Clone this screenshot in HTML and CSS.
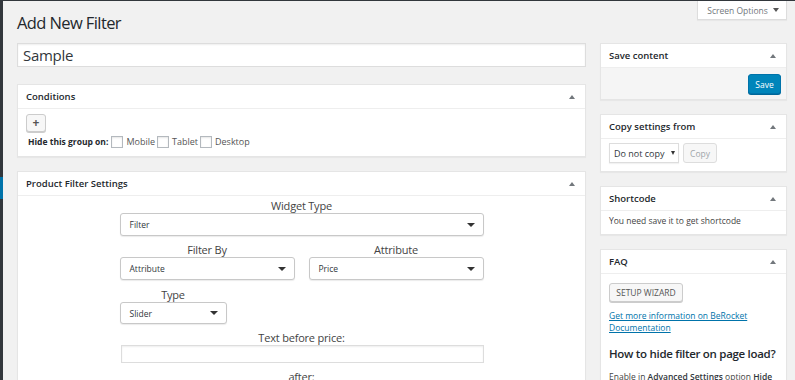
FILE: index.html
```html
<!DOCTYPE html>
<html>
<head>
<meta charset="utf-8">
<link rel="stylesheet" href="styles.css">
</head>
<body>
<div class="admin">
  <div class="sidebar"><span class="active-mark"></span></div>
  <div class="content">
    <div class="topline">
      <h1 class="page-title">Add New Filter</h1>
      <div class="screen-options">Screen Options <span class="tri-down"></span></div>
    </div>
    <div class="columns">
      <div class="main-col">
        <div class="title-input">Sample</div>

        <div class="postbox conditions">
          <div class="box-head"><span>Conditions</span><span class="tri-up"></span></div>
          <div class="box-body cond-body">
            <button class="plus-btn">+</button>
            <div class="hide-row">
              <b>Hide this group on:</b>
              <span class="chk"></span><span class="chk-label">Mobile</span>
              <span class="chk"></span><span class="chk-label">Tablet</span>
              <span class="chk"></span><span class="chk-label">Desktop</span>
            </div>
          </div>
        </div>

        <div class="postbox settings">
          <div class="box-head"><span>Product Filter Settings</span><span class="tri-up"></span></div>
          <div class="box-body settings-body">
            <div class="form">
              <div class="field">
                <div class="flabel">Widget Type</div>
                <div class="select"><span>Filter</span><span class="sel-arrow"></span></div>
              </div>
              <div class="field-row">
                <div class="field">
                  <div class="flabel">Filter By</div>
                  <div class="select"><span>Attribute</span><span class="sel-arrow"></span></div>
                </div>
                <div class="field">
                  <div class="flabel">Attribute</div>
                  <div class="select"><span>Price</span><span class="sel-arrow"></span></div>
                </div>
              </div>
              <div class="field type-field">
                <div class="flabel">Type</div>
                <div class="select short"><span>Slider</span><span class="sel-arrow"></span></div>
              </div>
              <div class="field">
                <div class="flabel">Text before price:</div>
                <div class="text-input"></div>
              </div>
              <div class="field">
                <div class="flabel">after:</div>
              </div>
            </div>
          </div>
        </div>
      </div>

      <div class="side-col">
        <div class="postbox box-save">
          <div class="box-head"><span>Save content</span><span class="tri-up"></span></div>
          <div class="box-body save-body">
            <button class="btn-primary">Save</button>
          </div>
        </div>

        <div class="postbox box-copy">
          <div class="box-head"><span>Copy settings from</span><span class="tri-up"></span></div>
          <div class="box-body copy-body">
            <div class="small-select">Do not copy <span class="tri-small"></span></div>
            <button class="btn-disabled">Copy</button>
          </div>
        </div>

        <div class="postbox box-short">
          <div class="box-head"><span>Shortcode</span><span class="tri-up"></span></div>
          <div class="box-body text-body">You need save it to get shortcode</div>
        </div>

        <div class="postbox">
          <div class="box-head"><span>FAQ</span><span class="tri-up"></span></div>
          <div class="box-body faq-body">
            <button class="btn-secondary">SETUP WIZARD</button>
            <a class="doc-link" href="#">Get more information on BeRocket Documentation</a>
            <h3 class="faq-q">How to hide filter on page load?</h3>
            <p class="faq-a">Enable in <b>Advanced Settings</b> option <b>Hide</b></p>
          </div>
        </div>
      </div>
    </div>
  </div>
</div>
</body>
</html>
```

FILE: styles.css
```css
* { box-sizing: border-box; }
html, body { margin: 0; padding: 0; }
body {
  background: #f1f1f1;
  font-family: "Open Sans", "Noto Sans", sans-serif;
  color: #444;
  border-top: 1px solid #32373c;
  height: 380px;
  overflow: hidden;
}
.admin { display: flex; height: 379px; }
.sidebar {
  width: 3px;
  background: #32373c;
  flex: none;
  padding-top: 176px;
}
.active-mark { display: block; width: 3px; height: 22px; background: #0073aa; }
.content { flex: 1; padding-left: 14px; padding-right: 8px; }

.topline { display: flex; justify-content: space-between; align-items: flex-start; height: 42px; }
.page-title {
  margin: 10px 0 0 0;
  font-size: 16.5px;
  font-weight: 400;
  color: #23282d;
  letter-spacing: -0.6px;
  line-height: 24px;
}
.screen-options {
  width: 90px;
  height: 19px;
  background: #fff;
  border: 1px solid #ddd;
  border-top: none;
  box-shadow: 0 1px 1px rgba(0,0,0,.04);
  font-size: 8.5px;
  color: #72777c;
  display: flex;
  align-items: center;
  justify-content: center;
  gap: 5px;
  padding-left: 2px;
}
.tri-down { width: 0; height: 0; border-left: 3px solid transparent; border-right: 3px solid transparent; border-top: 4px solid #555; }

.columns { display: grid; grid-template-columns: 569px 187px; column-gap: 14px; }
.main-col, .side-col { display: flex; flex-direction: column; }
.side-col { gap: 14px; }

.title-input {
  height: 24px;
  background: #fff;
  border: 1px solid #ddd;
  box-shadow: inset 0 1px 2px rgba(0,0,0,.07);
  font-size: 15px;
  letter-spacing: -0.3px;
  color: #32373c;
  padding-left: 5px;
  line-height: 22px;
  margin-bottom: 17px;
}

.postbox {
  background: #fff;
  border: 1px solid #e5e5e5;
  box-shadow: 0 1px 1px rgba(0,0,0,.04);
  flex: none;
}
.box-head {
  height: 24px;
  border-bottom: 1px solid #eee;
  display: flex;
  align-items: center;
  justify-content: space-between;
  padding: 0 10px 0 8px;
  font-size: 9.5px;
  font-weight: 600;
  color: #23282d;
}
.tri-up { width: 0; height: 0; border-left: 3px solid transparent; border-right: 3px solid transparent; border-bottom: 4px solid #72777c; }

.conditions { height: 73px; margin-bottom: 14px; }
.cond-body { padding: 5px 8px 0 8px; }
.plus-btn {
  display: block;
  width: 20px; height: 18px;
  padding: 0;
  background: #f7f7f7;
  border: 1px solid #ccc;
  border-radius: 3px;
  box-shadow: 0 1px 0 #ccc;
  font-family: inherit;
  font-size: 12px;
  font-weight: 700;
  line-height: 14px;
  color: #555;
}
.hide-row { display: flex; align-items: center; margin-top: 3px; font-size: 8.5px; height: 13px; }
.hide-row b { color: #23282d; font-weight: 700; margin-left: 2px; margin-right: 3px; }
.chk { width: 12px; height: 12px; border: 1px solid #b4b9be; background: #fff; box-shadow: inset 0 1px 2px rgba(0,0,0,.1); margin-right: 3px; }
.chk-label { color: #555; margin-right: 2px; font-size: 9px; }

.settings { flex: 1; }
.settings-body { padding-top: 3px; }
.form { width: 364px; margin: 0 auto; display: flex; flex-direction: column; gap: 7px; }
.field { display: flex; flex-direction: column; align-items: stretch; }
.flabel { text-align: center; font-size: 11px; letter-spacing: -0.2px; color: #444; line-height: 14px; height: 14px; }
.field-row { display: grid; grid-template-columns: 175px 175px; column-gap: 14px; }
.type-field { width: 107px; gap: 0; margin-top: 1px; }
.select {
  height: 23px;
  border: 1px solid #c8c8c8;
  border-radius: 3px;
  box-shadow: 0 1px 1px rgba(0,0,0,.08);
  background: #fff;
  display: flex;
  align-items: center;
  justify-content: space-between;
  padding: 0 8px 0 9px;
  font-size: 8.5px;
  color: #32373c;
}
.select.short { height: 22px; }
.sel-arrow { width: 0; height: 0; border-left: 4px solid transparent; border-right: 4px solid transparent; border-top: 4px solid #333; }
.text-input {
  height: 18px;
  margin-left: 1px;
  border: 1px solid #ddd;
  box-shadow: inset 0 1px 2px rgba(0,0,0,.07);
  background: #fff;
}

.box-save { height: 57px; }
.box-copy { height: 58px; }
.box-short { height: 49px; }

.save-body { background: #f5f5f5; display: flex; justify-content: flex-end; padding: 6px 5px 4px 0; height: 31px; }
.btn-primary {
  width: 33px; height: 20px;
  background: #0085ba;
  border: 1px solid #0073aa;
  border-radius: 3px;
  box-shadow: 0 1px 0 #006799;
  color: #fff;
  font-family: inherit;
  font-size: 8.5px;
  padding: 0;
}

.copy-body { display: flex; align-items: center; gap: 4px; padding: 4px 8px 0 8px; }
.small-select {
  width: 70px; height: 20px;
  border: 1px solid #ddd;
  box-shadow: 0 1px 1px rgba(0,0,0,.05);
  display: flex; align-items: center;
  padding-left: 4px;
  gap: 6px;
  font-size: 9px;
  color: #32373c;
}
.tri-small { width: 0; height: 0; border-left: 2.5px solid transparent; border-right: 2.5px solid transparent; border-top: 4px solid #333; }
.btn-disabled {
  width: 34px; height: 20px;
  background: #f7f7f7;
  border: 1px solid #ddd;
  border-radius: 3px;
  color: #a0a5aa;
  font-family: inherit;
  font-size: 8.5px;
  padding: 0;
}

.text-body { font-size: 8.5px; color: #444; padding: 4px 8px 0 8px; line-height: 12px; }

.faq-body { padding: 9px 8px 0 8px; font-size: 8.5px; }
.btn-secondary {
  display: block;
  width: 74px; height: 19px;
  background: #f7f7f7;
  border: 1px solid #ccc;
  border-radius: 3px;
  box-shadow: 0 1px 0 #ccc;
  color: #555;
  font-family: inherit;
  font-size: 8.5px;
  padding: 0;
}
.doc-link { display: block; margin-top: 8px; color: #0073aa; text-decoration: underline; line-height: 12px; width: 150px; }
.faq-q { margin: 12px 0 0 0; font-size: 11.5px; letter-spacing: -0.3px; font-weight: 600; color: #23282d; line-height: 16px; white-space: nowrap; }
.faq-a { margin: 9px 0 0 0; line-height: 12px; color: #444; }
.faq-a b { font-weight: 600; color: #32373c; }
```
